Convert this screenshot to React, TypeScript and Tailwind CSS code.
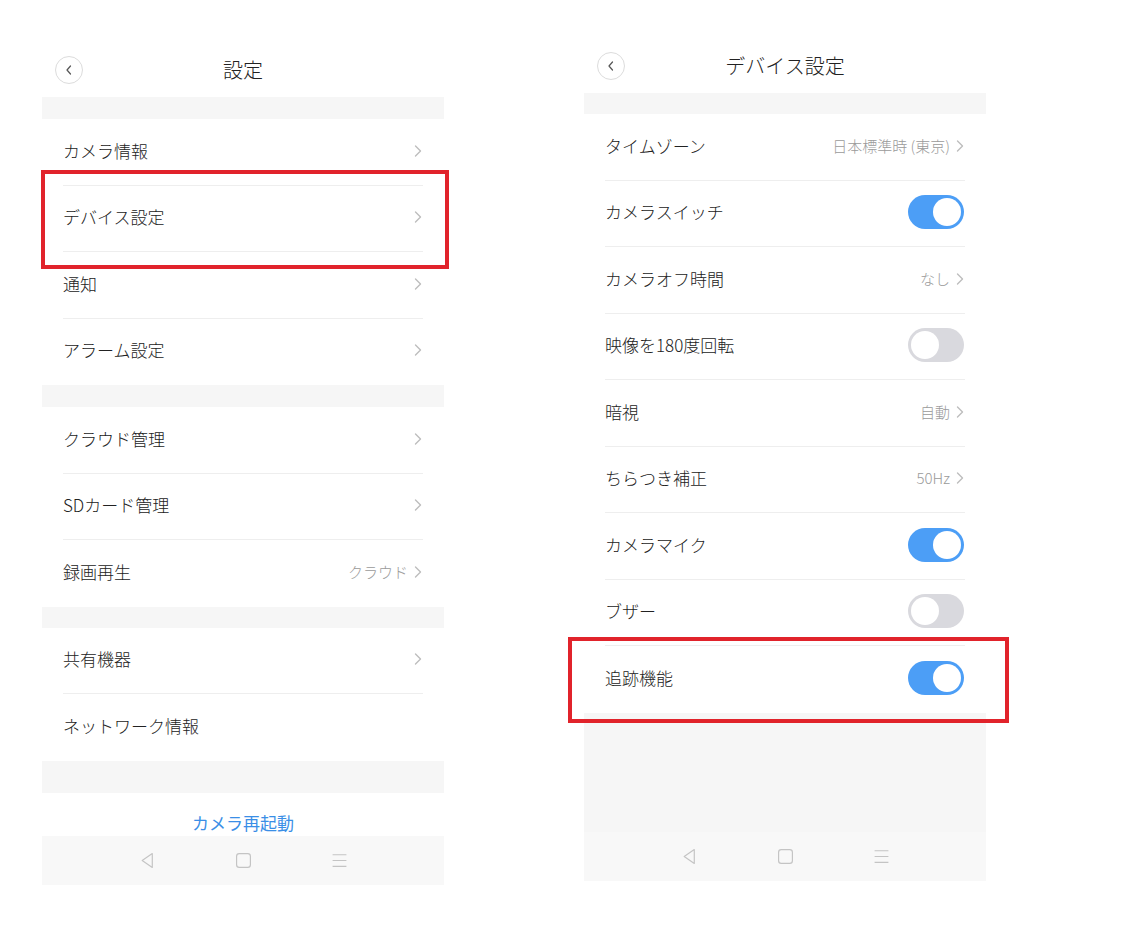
import React from "react";

const FONT = { fontFamily: '"Noto Sans CJK JP", "Noto Sans", "Liberation Sans", sans-serif' };

function Chevron() {
  return (
    <svg width="8" height="14" viewBox="0 0 8 14" className="shrink-0">
      <path d="M1.5 2 L6.5 7 L1.5 12" fill="none" stroke="#bdbdbd" strokeWidth="1.4" strokeLinecap="round" strokeLinejoin="round" />
    </svg>
  );
}

function BackButton() {
  return (
    <div className="absolute left-[13px] top-[13px] w-[28px] h-[28px] rounded-full border border-[#dcdcdc] flex items-center justify-center">
      <svg width="10" height="12" viewBox="0 0 10 12">
        <path d="M6.5 2 L3 6 L6.5 10" fill="none" stroke="#555" strokeWidth="1.2" strokeLinecap="round" strokeLinejoin="round" />
      </svg>
    </div>
  );
}

function Header({ title }: { title: string }) {
  return (
    <div className="relative h-[54px] flex items-center justify-center bg-white">
      <BackButton />
      <span className="text-[20px] text-[#222] font-light">{title}</span>
    </div>
  );
}

function Toggle({ on }: { on: boolean }) {
  return (
    <div className={`w-[56px] h-[34px] rounded-full flex items-center px-[3px] ${on ? "bg-[#4c9ef6] justify-end" : "bg-[#d9d9de] justify-start"}`}>
      <div className="w-[28px] h-[28px] rounded-full bg-white" />
    </div>
  );
}

type RowProps = { label: string; value?: string; chevron?: boolean; toggle?: boolean; on?: boolean; last?: boolean };

function Row({ label, value, chevron, toggle, on, last }: RowProps) {
  return (
    <div className="h-[66.5px] flex flex-col bg-white">
      <div className="flex-1 flex items-center justify-between pl-[21px] pr-[22px]">
        <span className="text-[17px] text-[#222] font-light pb-[3px]">{label}</span>
        <div className="flex items-center gap-[6px] pb-[2px]">
          {value && <span className="text-[15px] text-[#9a9a9a] font-light">{value}</span>}
          {chevron && <Chevron />}
          {toggle && <Toggle on={!!on} />}
        </div>
      </div>
      <div className={`mx-[21px] h-px ${last ? "bg-transparent" : "bg-[#eeeeee]"}`} />
    </div>
  );
}

function NavBar() {
  return (
    <div className="h-[49px] bg-[#f8f8f8] flex items-center justify-center gap-[79px]">
      <svg width="17" height="17" viewBox="0 0 16 16">
        <path d="M12.5 1.5 L3 8 L12.5 14.5 Z" fill="none" stroke="#c4c4c4" strokeWidth="1.1" strokeLinejoin="round" />
      </svg>
      <svg width="17" height="17" viewBox="0 0 16 16">
        <rect x="1.5" y="1.5" width="13" height="13" rx="2.5" fill="none" stroke="#c4c4c4" strokeWidth="1.1" />
      </svg>
      <svg width="17" height="17" viewBox="0 0 16 16">
        <path d="M1.5 2.5 H14.5 M1.5 8 H14.5 M1.5 13.5 H14.5" fill="none" stroke="#c4c4c4" strokeWidth="1" />
      </svg>
    </div>
  );
}

function Band({ h }: { h: string }) {
  return <div className={`${h} bg-[#f6f6f6]`} />;
}

export default function App() {
  return (
    <div className="w-[1142px] h-[948px] bg-white flex items-start" style={FONT}>
      {/* Left panel */}
      <div className="relative ml-[42px] mt-[43px] w-[402px] flex flex-col">
        <Header title="設定" />
        <Band h="h-[22px]" />
        <Row label="カメラ情報" chevron />
        <Row label="デバイス設定" chevron />
        <Row label="通知" chevron />
        <Row label="アラーム設定" chevron last />
        <Band h="h-[22px]" />
        <Row label="クラウド管理" chevron />
        <Row label="SDカード管理" chevron />
        <Row label="録画再生" value="クラウド" chevron last />
        <Band h="h-[21px]" />
        <Row label="共有機器" chevron />
        <Row label="ネットワーク情報" last />
        <Band h="h-[32px]" />
        <div className="h-[43px] bg-white flex items-end justify-center pb-[2px]">
          <span className="text-[17px] text-[#3a8ee6] leading-[22px]">カメラ再起動</span>
        </div>
        <NavBar />
        <div className="absolute left-[-1px] top-[127px] w-[408px] h-[99px] border-[4px] border-[#e1232b]" />
      </div>

      {/* Right panel */}
      <div className="relative ml-[140px] mt-[39px] w-[402px] flex flex-col">
        <Header title="デバイス設定" />
        <Band h="h-[21px]" />
        <Row label="タイムゾーン" value="日本標準時 (東京)" chevron />
        <Row label="カメラスイッチ" toggle on />
        <Row label="カメラオフ時間" value="なし" chevron />
        <Row label="映像を180度回転" toggle on={false} />
        <Row label="暗視" value="自動" chevron />
        <Row label="ちらつき補正" value="50Hz" chevron />
        <Row label="カメラマイク" toggle on />
        <Row label="ブザー" toggle on={false} />
        <Row label="追跡機能" toggle on last />
        <Band h="h-[119px]" />
        <NavBar />
        <div className="absolute left-[-16px] top-[598px] w-[441px] h-[86px] border-[4px] border-[#e1232b]" />
      </div>
    </div>
  );
}
